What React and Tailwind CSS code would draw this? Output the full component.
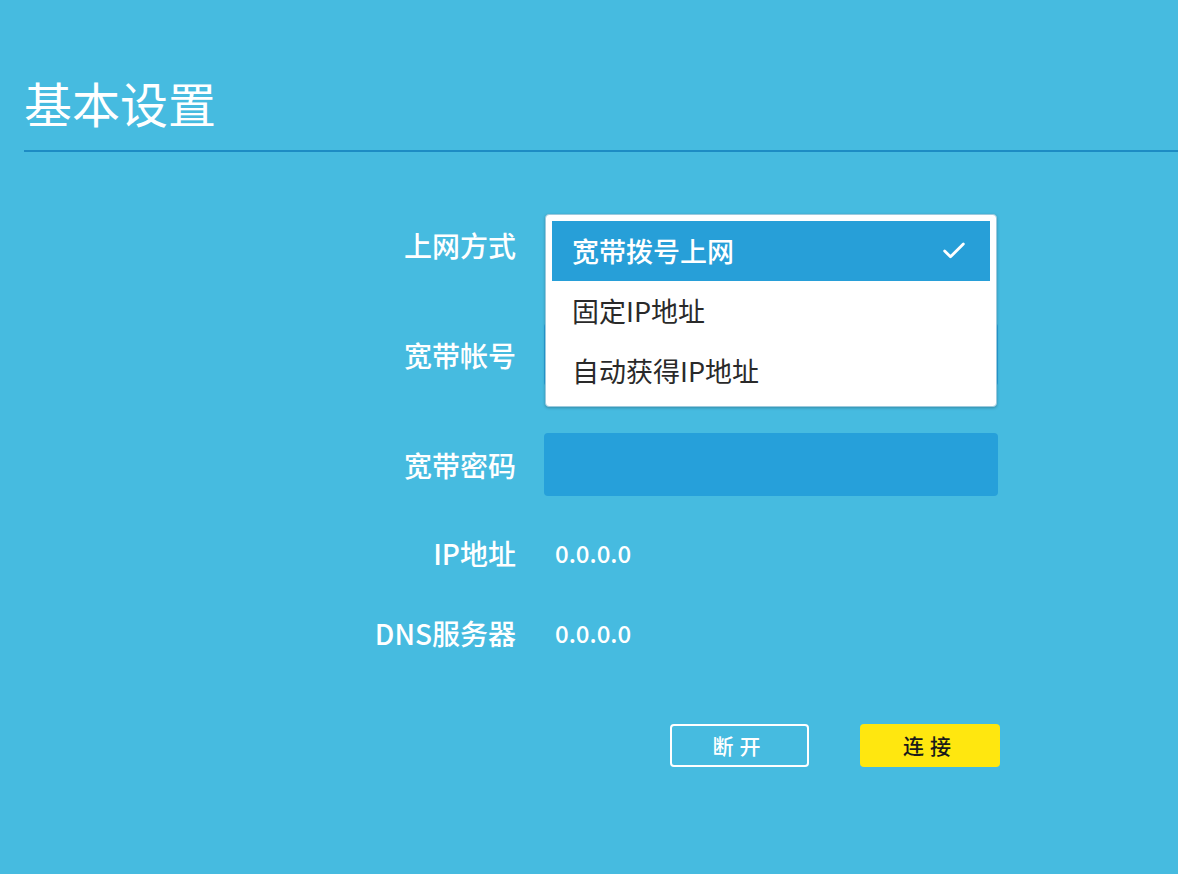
import { Check } from "lucide-react";

const font = { fontFamily: '"Noto Sans CJK SC", "Noto Sans", sans-serif' };

function Row({ label, children, className = "" }) {
  return (
    <div className={`flex items-center ${className}`}>
      <div className="w-[516px] text-right text-[28px] font-medium text-white shrink-0">{label}</div>
      <div className="ml-[28px] w-[454px]">{children}</div>
    </div>
  );
}

export default function App() {
  const options = ["固定IP地址", "自动获得IP地址"];

  return (
    <div className="w-[1178px] h-[874px] bg-[#46bbe0] overflow-hidden" style={font}>
      <div className="pl-[24px] pt-[72px]">
        <h1 className="text-[48px] leading-[60px] text-white font-normal">基本设置</h1>
        <div className="mt-[18px] h-[2px] bg-[#1d8cc4]" />
      </div>

      <div className="mt-[61px] flex flex-col">
        <Row label="上网方式" className="h-[63px] relative">
          <div className="h-[63px]" />
          <div className="absolute left-[545px] top-[1px] w-[452px] h-[193px] bg-white rounded-[4px] border border-[#9cc9dd] shadow-[0_1px_3px_rgba(0,0,0,0.25)] p-[6px] z-10">
            <div className="h-[60px] bg-[#279fd8] flex items-center justify-between pl-[20px] pr-[22px]">
              <span className="text-[27px] font-medium text-white">宽带拨号上网</span>
              <Check className="w-[28px] h-[28px] text-white" strokeWidth={2.4} />
            </div>
            {options.map((o) => (
              <div key={o} className="h-[60px] flex items-center pl-[20px] text-[27px] text-[#2a2a2a]">
                {o}
              </div>
            ))}
          </div>
        </Row>

        <Row label="宽带帐号" className="h-[63px] mt-[47px]">
          <div className="h-[63px] rounded-[4px] bg-[#26a0da]" />
        </Row>

        <Row label="宽带密码" className="h-[63px] mt-[47px]">
          <div className="h-[63px] rounded-[4px] bg-[#26a0da]" />
        </Row>

        <Row label="IP地址" className="h-[40px] mt-[37px]">
          <span className="text-[24px] font-medium text-white ml-[11px] block">0.0.0.0</span>
        </Row>

        <Row label="DNS服务器" className="h-[40px] mt-[40px]">
          <span className="text-[24px] font-medium text-white ml-[11px] block">0.0.0.0</span>
        </Row>
      </div>

      <div className="mt-[71px] flex pl-[670px] gap-[51px]">
        <button className="w-[139px] h-[43px] rounded-[4px] border-2 border-white text-white text-[21px] tracking-[6px] font-medium">
          断开
        </button>
        <button className="w-[140px] h-[43px] rounded-[4px] bg-[#ffe70f] text-[#1a1a1a] text-[21px] tracking-[6px] font-medium">
          连接
        </button>
      </div>
    </div>
  );
}
